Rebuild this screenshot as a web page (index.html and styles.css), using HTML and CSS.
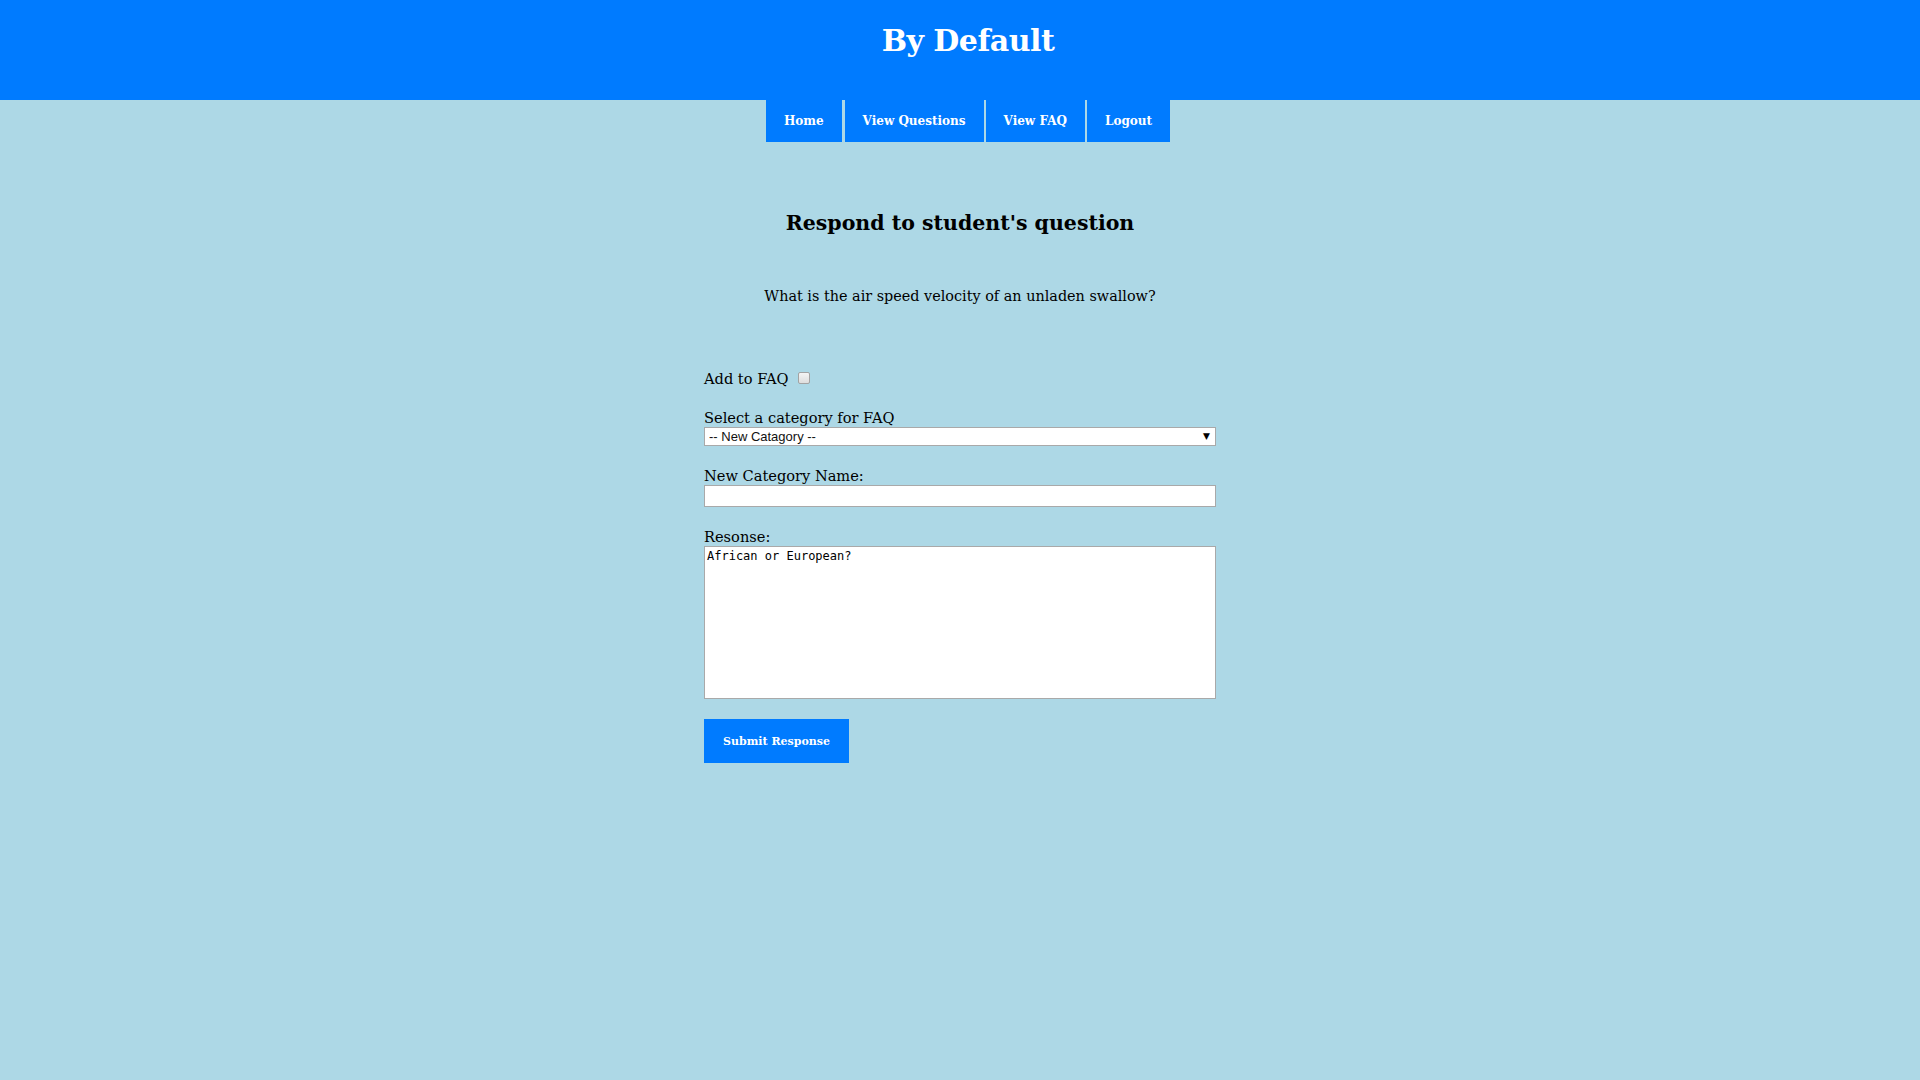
FILE: index.html
```html
<!DOCTYPE html>
<html>
<head>
<meta charset="utf-8">
<link rel="stylesheet" href="styles.css">
</head>
<body>
<header class="site-header">
  <h1 class="brand">By Default</h1>
</header>
<nav class="nav">
  <a class="nav-item" href="#">Home</a>
  <a class="nav-item" href="#">View Questions</a>
  <a class="nav-item" href="#">View FAQ</a>
  <a class="nav-item" href="#">Logout</a>
</nav>
<main class="content">
  <h2 class="page-title">Respond to student's question</h2>
  <p class="question">What is the air speed velocity of an unladen swallow?</p>
  <form class="form">
    <div class="row-check">
      <label class="label">Add to FAQ</label>
      <input type="checkbox" class="check">
    </div>
    <div class="field">
      <label class="label">Select a category for FAQ</label>
      <div class="select-wrap">
        <select class="select"><option>-- New Catagory --</option></select>
        <span class="select-arrow">&#9660;</span>
      </div>
    </div>
    <div class="field">
      <label class="label">New Category Name:</label>
      <input type="text" class="text-input">
    </div>
    <div class="field">
      <label class="label">Resonse:</label>
      <textarea class="textarea">African or European?</textarea>
    </div>
    <button type="button" class="submit">Submit Response</button>
  </form>
</main>
</body>
</html>
```
FILE: styles.css
```css
html, body {
  margin: 0;
  padding: 0;
}
body {
  background: #add8e6;
  font-family: "DejaVu Serif", "Liberation Serif", serif;
  color: #000;
}
.site-header {
  background: #007bff;
  height: 100px;
  display: flex;
  justify-content: center;
  padding-left: 16px;
  box-sizing: border-box;
}
.brand {
  margin: 0;
  padding-top: 23px;
  color: #fff;
  font-size: 30px;
  font-weight: bold;
  letter-spacing: -0.5px;
}
.nav {
  display: flex;
  justify-content: center;
  gap: 2px;
  padding-left: 16px;
}
.nav-item {
  background: #007bff;
  color: #fff;
  text-decoration: none;
  height: 42px;
  display: flex;
  align-items: center;
  padding: 0 18px;
  font-size: 12px;
  font-weight: bold;
}
.nav-item:first-child {
  margin-right: 1px;
}
.content {
  width: 512px;
  margin: 0 auto;
}
.page-title {
  text-align: center;
  font-size: 20.5px;
  line-height: 24px;
  font-weight: bold;
  margin: 69px 0 0;
}
.question {
  text-align: center;
  font-size: 14.4px;
  line-height: 18px;
  margin: 52px 0 0;
}
.form {
  margin-top: 65px;
  font-size: 14.6px;
}
.row-check {
  display: flex;
  align-items: flex-start;
  gap: 9px;
}
.label {
  line-height: 18px;
}
.check {
  appearance: none;
  -webkit-appearance: none;
  width: 12px;
  height: 12px;
  margin: 2px 0 0;
  box-sizing: border-box;
  border: 1px solid #a3a3a3;
  border-radius: 2px;
  background: linear-gradient(#f4f4f4, #dedede);
}
.field {
  display: flex;
  flex-direction: column;
  margin-top: 21px;
}
.select-wrap {
  position: relative;
  width: 512px;
}
.select {
  appearance: none;
  -webkit-appearance: none;
  width: 512px;
  height: 19px;
  box-sizing: border-box;
  font-family: "Liberation Sans", Arial, sans-serif;
  font-size: 13px;
  line-height: 17px;
  color: #111;
  border: 1px solid #a9a9a9;
  background: #fff;
  padding: 0 4px;
  margin: 0;
  border-radius: 0;
}
.select-arrow {
  position: absolute;
  right: 6px;
  top: 3px;
  font-family: "DejaVu Sans", sans-serif;
  font-size: 9px;
  line-height: 12px;
  color: #000;
  pointer-events: none;
}
.text-input {
  width: 512px;
  height: 22px;
  box-sizing: border-box;
  border: 1px solid #a9a9a9;
  background: #fff;
  margin: 0;
}
.textarea {
  width: 512px;
  height: 153px;
  box-sizing: border-box;
  border: 1px solid #a9a9a9;
  background: #fff;
  margin: 0;
  resize: none;
  font-family: "DejaVu Sans Mono", monospace;
  font-size: 12px;
  line-height: 15px;
  color: #000;
  padding: 2px 2px;
}
.submit {
  margin-top: 20px;
  width: 145px;
  height: 44px;
  background: #007bff;
  color: #fff;
  border: none;
  font-family: "DejaVu Serif", serif;
  font-size: 11px;
  font-weight: bold;
  padding: 0;
}
```
